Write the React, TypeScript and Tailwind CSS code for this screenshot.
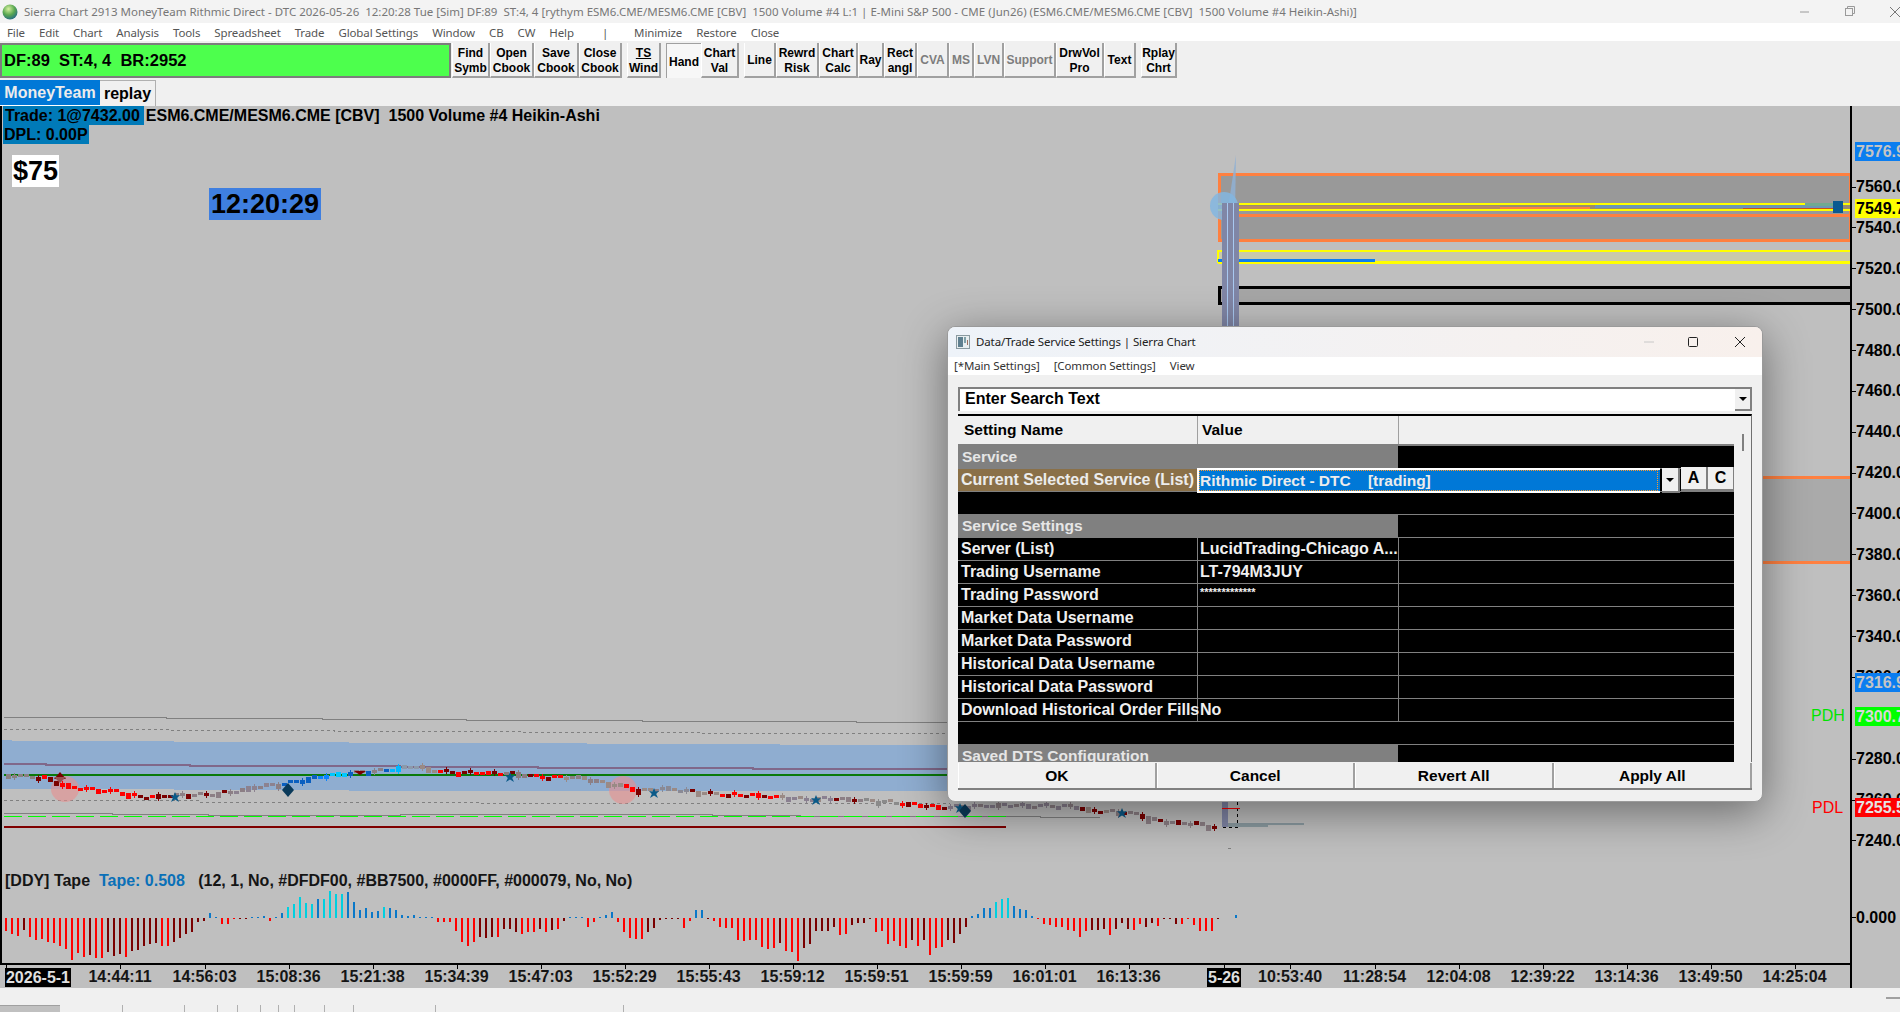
import { Fragment } from "react";

const ARIAL = "font-['Liberation_Sans',Arial,sans-serif]";
const SEGOE = "font-['Noto_Sans','Open_Sans',sans-serif]";

const menuItems = [
  "File",
  "Edit",
  "Chart",
  "Analysis",
  "Tools",
  "Spreadsheet",
  "Trade",
  "Global Settings",
  "Window",
  "CB",
  "CW",
  "Help",
];

type ToolButton = {
  lines: string[];
  width: string;
  gap?: boolean;
  off?: boolean;
  pressed?: boolean;
};

const toolButtons: ToolButton[] = [
  { lines: ["Find", "Symb"], width: "w-[38px]" },
  { lines: ["Open", "Cbook"], width: "w-[44px]" },
  { lines: ["Save", "Cbook"], width: "w-[45px]" },
  { lines: ["Close", "Cbook"], width: "w-[43px]" },
  { lines: ["TS", "Wind"], width: "w-[34px]", gap: true },
  { lines: ["Hand"], width: "w-[35px]", gap: true, pressed: true },
  { lines: ["Chart", "Val"], width: "w-[38px]" },
  { lines: ["Line"], width: "w-[32px]", gap: true },
  { lines: ["Rewrd", "Risk"], width: "w-[43px]" },
  { lines: ["Chart", "Calc"], width: "w-[39px]" },
  { lines: ["Ray"], width: "w-[26px]" },
  { lines: ["Rect", "angl"], width: "w-[33px]" },
  { lines: ["CVA"], width: "w-[32px]", off: true },
  { lines: ["MS"], width: "w-[25px]", off: true },
  { lines: ["LVN"], width: "w-[30px]", off: true },
  { lines: ["Support"], width: "w-[52px]", off: true },
  { lines: ["DrwVol", "Pro"], width: "w-[48px]" },
  { lines: ["Text"], width: "w-[32px]" },
  { lines: ["Rplay", "Chrt"], width: "w-[36px]", gap: true },
];

const priceTicks = [
  7560, 7540, 7520, 7500, 7480, 7460, 7440, 7420, 7400, 7380, 7360, 7340, 7320,
  7280, 7260, 7240,
];

const priceY = (p: number) => 186.6 + (7560 - p) * 2.043;

const priceTags = [
  { text: "7576.9", top: "top-[36px]", box: "bg-[#0a7df0] text-[#c4c4c4]" },
  { text: "7549.7", top: "top-[93px]", box: "bg-[#ffff00] text-black" },
  { text: "7316.9", top: "top-[567px]", box: "bg-[#0a7df0] text-[#c4c4c4]" },
  { text: "7300.7", top: "top-[601px]", box: "bg-[#00ff00] text-[#d8d8d8]" },
  { text: "7255.5", top: "top-[692px]", box: "bg-[#ff0000] text-[#e4e4e4]" },
];

const timeLabels: [string, number][] = [
  ["14:44:11", 120],
  ["14:56:03", 204.5],
  ["15:08:36", 288.5],
  ["15:21:38", 372.5],
  ["15:34:39", 456.5],
  ["15:47:03", 540.5],
  ["15:52:29", 624.5],
  ["15:55:43", 708.5],
  ["15:59:12", 792.5],
  ["15:59:51", 876.5],
  ["15:59:59", 960.5],
  ["16:01:01", 1044.5],
  ["16:13:36", 1128.5],
  ["10:53:40", 1290],
  ["11:28:54", 1374.5],
  ["12:04:08", 1458.5],
  ["12:39:22", 1542.5],
  ["13:14:36", 1626.5],
  ["13:49:50", 1710.5],
  ["14:25:04", 1794.5],
];

const tabTicks = [122, 184, 217, 237, 260, 278, 294, 324, 353, 435, 623];

// price path of the candles, x -> y in page pixels
const path: [number, number][] = [
  [4, 775], [41, 777], [61, 785], [73, 788], [114, 791], [139, 797], [175, 795],
  [212, 794], [237, 791], [253, 787], [286, 783], [322, 776], [359, 772], [392, 769],
  [412, 766], [428, 770], [449, 772], [510, 773], [539, 777], [580, 777], [598, 782],
  [622, 786], [639, 791], [663, 788], [688, 791], [712, 794], [753, 795], [778, 797],
  [802, 799], [826, 798], [867, 800], [900, 803], [937, 807], [961, 806], [1006, 805],
  [1071, 806], [1092, 811], [1120, 812], [1140, 815], [1150, 820], [1176, 823],
  [1193, 823], [1205, 826], [1213, 827],
];

const candleColors: [number, string, string][] = [
  [32, "#8a8080", "#8a8080"],
  [62, "#7a0000", "#ff0000"],
  [130, "#ff0000", "#ff0000"],
  [165, "#7a0000", "#ff0000"],
  [230, "#8c7f85", "#7a0000"],
  [282, "#8c8290", "#8c7f85"],
  [315, "#0a5fc0", "#0a5fc0"],
  [330, "#0a84ff", "#0a84ff"],
  [345, "#00c8ff", "#00c8ff"],
  [385, "#8c7f85", "#0a5fc0"],
  [400, "#00b8ff", "#0a84ff"],
  [420, "#8c9aaa", "#8c9aaa"],
  [436, "#9a8a85", "#9a8a85"],
  [475, "#7a0000", "#ff0000"],
  [500, "#ff0000", "#7a0000"],
  [530, "#8a7a80", "#7a0000"],
  [560, "#ff0000", "#7a0000"],
  [600, "#8c7f85", "#9a8a85"],
  [622, "#9a8a85", "#9a8a85"],
  [640, "#ff0000", "#7a0000"],
  [660, "#9a8a85", "#8c7f85"],
  [690, "#8a8a95", "#9a8a85"],
  [720, "#9a8a85", "#7a0000"],
  [780, "#ff0000", "#7a0000"],
  [830, "#8a8090", "#9a8a85"],
  [860, "#8c7f85", "#7a0000"],
  [900, "#8a8a8a", "#9a8a85"],
  [945, "#ff0000", "#7a0000"],
  [1080, "#8a8090", "#8c7f85"],
  [1110, "#7a0000", "#9a8a85"],
  [1230, "#8c7f85", "#7a0000"],
];

const pathY = (x: number) => {
  for (let i = 1; i < path.length; i++) {
    if (x <= path[i][0]) {
      const [x0, y0] = path[i - 1];
      const [x1, y1] = path[i];
      return y0 + ((x - x0) / (x1 - x0)) * (y1 - y0);
    }
  }
  return path[path.length - 1][1];
};

const candles = Array.from({ length: 202 }, (_, i) => {
  const x = 6 + i * 6;
  const wobble = Math.sin(i * 1.7) * 1.2;
  const a = pathY(x - 3) + wobble;
  const b = pathY(x + 3) + wobble;
  const top = Math.min(a, b) - 1;
  const height = Math.max(3, Math.abs(a - b) + 2.5 + (i % 5 === 0 ? 2 : 0));
  const range = candleColors.find((c) => x < c[0]) ?? candleColors[0];
  return { x, top, height, color: i % 3 === 0 ? range[2] : range[1], wick: i % 4 === 1 };
});

// tape oscillator heights read off the chart, one bar every 6px
const oscValues = [
  -13, -16, -18, -12, -19, -22, -21, -24, -25, -28, -31, -42, -35, -39, -37, -40, -40, -34,
  -38, -36, -39, -33, -32, -28, -26, -25, -28, -28, -24, -20, -16, -14, -4, -3, 5,
  0, -6, -6, -1, -1, -1, 1, 0, 2, -3, 0, 5, 11, 14, 21, 15, 14, 19, 19, 27, 24, 24, 26, 16, 8,
  10, 6, 7, 11, 10, 8, 3, 2, 3, 0, 1, 1, -4, -4, -4, -13, -24, -28, -24, -19, -20, -19, -19,
  -11, -11, -14, -16, -14, -14, -11, -14, -12, -11, -3, 0, 1, 1, -9, -4, 0, 3, 6,
  -4, -14, -20, -21, -21, -14, -10, -2, -1, -1, -1, -10, -3, 8, 8, -1, -3, -9, -10, -10,
  -22, -23, -22, -22, -29, -31, -30, -25, -33, -34, -43, -30, -26, -13, -13, -13, -9, -17, -16,
  -7, -5, -5, -1, -14, -13, -26, -23, -28, -30, -22, -28, -22, -37, -30, -29, -22, -25, -16, -9,
  2, 4, 10, 10, 16, 19, 20, 12, 9, 8, 2, -1, -6, -7, -9, -9, -12, -13, -19, -13, -12, -12, -11,
  -17, -11, -5, -11, -12, -6, -9, -5, -8, -1, -1, -6, -6, -1, -7, -13, -13, -13, -1,
];

const oscBars = oscValues.map((v, i, all) => {
  const prev = i > 2 ? all[i - 3] : 0;
  let color = "#0a78c8";
  if (v < 0) color = v <= prev ? "#ff0000" : "#7a0000";
  else if (v >= 11 && v >= prev) color = "#00d0e0";
  return { x: 5 + i * 6, v, color };
});

const stars: [number, number][] = [
  [175, 797], [510, 777], [654, 793], [816, 800], [960, 808], [1122, 813],
];

const starPoints = (cx: number, cy: number) =>
  [
    [0, -5], [1.5, -1.5], [5, -2], [2.2, 1], [4, 5], [0, 2.5], [-4, 5], [-2.2, 1], [-5, -2], [-1.5, -1.5],
  ]
    .map(([dx, dy]) => `${cx + dx},${cy + dy}`)
    .join(" ");

function ChartDrawing() {
  return (
    <svg
      className="absolute top-0 left-[-2px] h-[857px] w-[1850px]"
      viewBox="0 106 1850 857"
      shapeRendering="crispEdges"
    >
      {/* upper zones */}
      <rect x="1219" y="174" width="631" height="66" fill="#999999" stroke="#ff8040" strokeWidth="3" />
      <rect x="1218" y="252" width="632" height="10" fill="#c9c9ab" />
      <path d="M1218 262.5 V251 H1850 M1218 262.5 H1850" fill="none" stroke="#ffff00" strokeWidth="2.5" />
      <rect x="1218" y="258.5" width="157" height="3" fill="#0a7df0" />
      <rect x="1219" y="287" width="631" height="16" fill="#a6a6a6" />
      <path d="M1850 287 H1219 V303 H1850" fill="none" stroke="#000000" strokeWidth="3" />
      <rect x="1218" y="214" width="632" height="3" fill="#ff8040" />
      <rect x="1218" y="204" width="632" height="5" fill="#9a8c70" />
      <rect x="1595" y="205" width="243" height="3" fill="#6c96b8" />
      <rect x="1220" y="206" width="280" height="3" fill="#ba8a60" />
      <rect x="1500" y="207" width="90" height="3" fill="#ff8040" />
      <rect x="1743" y="208" width="95" height="3" fill="#c8501c" />
      <rect x="1218" y="202.5" width="632" height="2" fill="#ffff00" />
      <rect x="1218" y="209" width="632" height="2" fill="#ffff00" />
      <rect x="1805" y="202.5" width="35" height="3" fill="#70aa90" />
      <rect x="1833" y="201" width="10" height="12" fill="#0a5a90" />
      <g shapeRendering="auto">
        <polygon points="1236,155 1235,215 1227,215" fill="#8fb0d4" opacity="0.85" />
        <circle cx="1224" cy="206" r="14" fill="#82b6e0" opacity="0.85" />
      </g>
      <rect x="1222" y="203" width="17" height="124" fill="#8086a6" />
      <rect x="1227" y="203" width="1" height="124" fill="#a8c8f0" />
      <rect x="1233" y="203" width="1" height="124" fill="#a8c8f0" />

      {/* zone partly behind the dialog */}
      <rect x="1300" y="478" width="550" height="83" fill="#aaaaaa" />
      <rect x="1300" y="475.5" width="550" height="3" fill="#ff8040" />
      <rect x="1300" y="560.5" width="550" height="3" fill="#ff8040" />

      {/* lower study */}
      <path
        d="M0 740 H12 V741 H174 V742 H349 V743 H587 V744 H780 V745 H950 V791 H780 V791 H349 V790 H174 V789 H0 Z"
        fill="#8fadd0"
      />
      <path
        d="M4 717 H166 V718 H322 V719 H466 V720 H642 V721 H856 V722 H1000"
        fill="none"
        stroke="#808080"
        strokeWidth="1"
      />
      <path
        d="M4 729 H170 V730 H334 V731 H520 V732 H700 V733 H1000"
        fill="none"
        stroke="#808080"
        strokeDasharray="3 3"
      />
      <path
        d="M4 764 H46 V765 H190 V766 H400 V767 H538 V768 H753 V769 H950"
        fill="none"
        stroke="#80688a"
        strokeWidth="2"
      />
      <rect x="4" y="774" width="1000" height="2" fill="#0a7a0a" />
      <path d="M4 800 H200 V802 H480 V803 H950" fill="none" stroke="#808080" strokeDasharray="3 3" />
      <path
        d="M4 813 H112 V814 H208 V815 H400 V814 H712 V815 H800 V816 H1040 V817 H1100"
        fill="none"
        stroke="#808080"
      />
      <line x1="4" y1="816.5" x2="1006" y2="816.5" stroke="#00ff00" strokeWidth="1.2" strokeDasharray="18 6" />
      <rect x="4" y="826" width="1002" height="2" fill="#800000" />

      <g shapeRendering="auto">
        <ellipse cx="65" cy="789" rx="14" ry="13" fill="#e88f8f" opacity="0.6" />
        <ellipse cx="623" cy="790" rx="14" ry="14" fill="#e88f8f" opacity="0.6" />
      </g>

      {candles.map((c) => (
        <Fragment key={c.x}>
          {c.wick && <rect x={c.x + 2} y={c.top - 2} width="1" height={c.height + 4} fill={c.color} />}
          <rect x={c.x} y={c.top} width="5" height={c.height} fill={c.color} />
        </Fragment>
      ))}

      <g shapeRendering="auto">
        {stars.map(([x, y]) => (
          <polygon key={x} points={starPoints(x, y)} fill="#0b5a88" />
        ))}
        <polygon points="288,783 294,790 288,797 282,790" fill="#0a3a5a" />
        <polygon points="965,804 971,811 965,818 959,811" fill="#0a3a5a" />
        <polygon points="60,772 66,779 54,779" fill="#7a0000" />
        <polygon points="60,783 66,777 54,777" fill="#9a5050" />
        <polygon points="360,771 366,771 360,775 354,771" fill="#7a0000" />
      </g>

      {/* last bar and volume profile */}
      <rect x="1222" y="800" width="6" height="27" fill="#8086a6" />
      <path d="M1237 802 V827 H1222" fill="none" stroke="#000000" strokeDasharray="3 3" />
      <rect x="1222" y="808" width="18" height="1" fill="#ff0000" />
      <rect x="1228" y="823" width="76" height="2" fill="#8a9aa0" />
      <rect x="1228" y="825" width="40" height="2" fill="#8a9aa0" />
      <rect x="1228" y="848" width="3" height="1" fill="#808080" />

      {/* tape oscillator */}
      {oscBars.map((b) => (
        <rect
          key={b.x}
          x={b.x}
          y={b.v < 0 ? 918 : 918 - Math.max(b.v, 1)}
          width="2"
          height={Math.max(Math.abs(b.v), 1)}
          fill={b.color}
        />
      ))}
      <rect x="1235" y="915" width="2" height="3" fill="#0a78c8" />
    </svg>
  );
}

function Toolbar() {
  return (
    <div className="flex h-[65px] flex-col bg-[#f0f0f0]">
      <div className={`flex h-[37px] items-start pt-[2px] ${ARIAL}`}>
        <div className="flex h-[35px] w-[451px] items-center border-2 border-[#7d7d7d] bg-[#4dff4d] pl-[2px] text-[16.5px] font-bold text-black">
          DF:89&nbsp;&nbsp;ST:4, 4&nbsp;&nbsp;BR:2952
        </div>
        <div className="w-px" />
        {toolButtons.map((b) => (
          <div
            key={b.lines.join("")}
            className={`flex h-[35px] flex-col items-center justify-center pt-[2px] text-[12px] leading-[14.5px] font-bold ${b.width} ${
              b.gap ? "ml-[5px]" : ""
            } ${b.off ? "text-[#7d7d7d]" : "text-black"} ${
              b.pressed
                ? "border-t border-l border-t-[#a0a0a0] border-l-[#a0a0a0] bg-[#f7f7f7]"
                : "border-r-2 border-b-2 border-l border-r-[#a0a0a0] border-b-[#a0a0a0] border-l-white"
            }`}
          >
            {b.lines.map((l) => (
              <span key={l} className="whitespace-nowrap">
                {l === "TS" ? <span className="underline">TS</span> : l}
              </span>
            ))}
          </div>
        ))}
      </div>
      <div className={`mt-[2px] flex h-[26px] items-stretch text-[16px] font-bold ${ARIAL}`}>
        <div className="flex w-[100px] items-center justify-center border-b border-white bg-[#0078d7] text-[#ececec]">
          MoneyTeam
        </div>
        <div className="flex w-[56px] items-center justify-center border-t border-r border-[#b0b0b0] text-black">
          replay
        </div>
      </div>
    </div>
  );
}

function ChartArea() {
  return (
    <div className={`flex min-h-0 flex-1 bg-[#bfbfbf] ${ARIAL}`}>
      <div className="flex w-[1850px] flex-col">
        <div className="relative flex-1 overflow-hidden border-l-2 border-black">
          <ChartDrawing />
          <div className="relative flex flex-col text-[16px] leading-[19px] font-bold text-black">
            <div className="whitespace-pre">
              <span className="ml-[1px] inline-block bg-[#007ab8] pr-[4px] pl-[2px]">Trade: 1@7432.00</span>
              <span className="ml-[2px]">ESM6.CME/MESM6.CME [CBV]  1500 Volume #4 Heikin-Ashi</span>
            </div>
            <div className="ml-[1px] w-fit bg-[#007ab8] pr-[1px] pl-[1px]">DPL: 0.00P</div>
            <div className="mt-[11px] ml-[10px] flex h-[32px] w-[47px] items-center justify-center bg-white text-[27px]">
              $75
            </div>
            <div className="mt-[1px] ml-[207px] flex h-[32px] w-[112px] items-center justify-center bg-[#3f7fe0] text-[27px]">
              12:20:29
            </div>
          </div>
          <div className="absolute top-[765px] left-[3px] text-[16px] leading-[20px] font-bold whitespace-pre text-[#151515]">
            {"[DDY] Tape  "}
            <span className="text-[#0a70b8]">Tape: 0.508</span>
            {"   (12, 1, No, #DFDF00, #BB7500, #0000FF, #000079, No, No)"}
          </div>
          <span className="absolute top-[600px] left-[1809px] text-[16px] leading-[19px] text-[#00e400]">PDH</span>
          <span className="absolute top-[692px] left-[1810px] text-[16px] leading-[19px] text-[#ff0000]">PDL</span>
        </div>
        <div className="relative h-[25px] border-t-2 border-black text-[16px] leading-[23px] font-bold text-[#151515]">
          <div className="absolute top-[3px] left-[5px] flex h-[19px] w-[66px] items-center justify-center bg-black text-[#e0e0e0]">
            2026-5-1
          </div>
          <div className="absolute top-[3px] left-[1207px] flex h-[19px] w-[34px] items-center justify-center bg-black text-[#e0e0e0]">
            5-26
          </div>
          {timeLabels.map(([text, x]) => (
            <Fragment key={text}>
              <span className="absolute top-0 -translate-x-1/2" style={{ left: x }}>
                {text}
              </span>
              <span className="absolute top-0 h-[4px] w-px bg-black" style={{ left: x }} />
            </Fragment>
          ))}
          <span className="absolute top-0 left-[6px] h-[4px] w-px bg-black" />
          <span className="absolute top-0 left-[1224px] h-[4px] w-px bg-black" />
        </div>
      </div>
      <div className="relative flex-1 overflow-hidden border-l-2 border-black text-[16px] leading-[19px] font-bold text-black">
        {priceTicks.map((p) => (
          <Fragment key={p}>
            <span className="absolute left-0 h-px w-[4px] bg-black" style={{ top: priceY(p) - 106 }} />
            <span className="absolute left-[4px]" style={{ top: priceY(p) - 106 - 9.5 }}>
              {p}.0
            </span>
          </Fragment>
        ))}
        <span className="absolute top-[811px] left-0 h-px w-[4px] bg-black" />
        <span className="absolute top-[802px] left-[4px]">0.000</span>
        {priceTags.map((t) => (
          <span
            key={t.text}
            className={`absolute left-[3px] h-[19px] w-[60px] pl-[1px] ${t.top} ${t.box}`}
          >
            {t.text}
          </span>
        ))}
      </div>
    </div>
  );
}

type Row = {
  name?: string;
  value?: string;
  kind?: "section" | "selected" | "blank" | "password";
};

const rows: Row[] = [
  { name: "Service", kind: "section" },
  { name: "Current Selected Service (List)", kind: "selected" },
  { kind: "blank" },
  { name: "Service Settings", kind: "section" },
  { name: "Server (List)", value: "LucidTrading-Chicago A..." },
  { name: "Trading Username", value: "LT-794M3JUY" },
  { name: "Trading Password", value: "*************", kind: "password" },
  { name: "Market Data Username" },
  { name: "Market Data Password" },
  { name: "Historical Data Username" },
  { name: "Historical Data Password" },
  { name: "Download Historical Order Fills", value: "No" },
  { kind: "blank" },
  { name: "Saved DTS Configuration", kind: "section" },
];

function SettingRow({ row }: { row: Row }) {
  if (row.kind === "blank") {
    return <div className="h-[23px] shrink-0 border-b border-[#808080] bg-black" />;
  }
  if (row.kind === "section") {
    return (
      <div className="flex h-[23px] shrink-0 border-b border-[#808080] bg-black">
        <div className="flex w-[440px] items-center bg-[#808080] pl-[4px] text-[15.5px] text-[#e6e6e6]">{row.name}</div>
      </div>
    );
  }
  if (row.kind === "selected") {
    return (
      <div className="relative flex h-[23px] shrink-0 border-b border-[#808080] bg-black">
        <div className="flex w-[239px] items-center bg-[#8a7048] pl-[3px] whitespace-nowrap text-[#ececec]">
          {row.name}
        </div>
        <div className="absolute top-[-1px] left-[239px] flex h-[25px] w-[463px] items-center border-2 border-r-0 border-white bg-[#0078d7] pl-[1px] text-[15.5px] whitespace-pre text-[#ececec] outline-1 -outline-offset-3 outline-dotted outline-[#ff9a30]">
          {"Rithmic Direct - DTC    [trading]"}
        </div>
        <div className="absolute top-[-1px] left-[704px] flex h-[25px] w-[18px] items-center justify-center border-r-2 border-b-2 border-[#808080] bg-[#f0f0f0]">
          <span className="border-x-[4px] border-t-[4px] border-x-transparent border-t-black" />
        </div>
        <div className="absolute top-[-2px] left-[723px] flex h-[24px] w-[27px] items-center justify-center border-r-2 border-b-2 border-[#808080] bg-[#f0f0f0] text-black">
          A
        </div>
        <div className="absolute top-[-2px] left-[750px] flex h-[24px] w-[27px] items-center justify-center border-r-2 border-b-2 border-[#808080] bg-[#f0f0f0] text-black">
          C
        </div>
      </div>
    );
  }
  return (
    <div className="flex h-[23px] shrink-0 border-b border-[#808080] bg-black text-[#f0f0f0]">
      <div className="flex w-[240px] items-center border-r border-[#808080] pl-[3px] whitespace-nowrap">{row.name}</div>
      <div
        className={`flex w-[201px] pl-[2px] whitespace-nowrap ${
          row.kind === "password" ? "items-start text-[11px]" : "items-center"
        } border-r border-[#808080]`}
      >
        {row.value}
      </div>
    </div>
  );
}

function SettingsDialog() {
  return (
    <div className="absolute top-[326px] left-[947px] flex h-[476px] w-[816px] flex-col overflow-hidden rounded-[8px] border border-[#9a9a9a] bg-[#f0f0f0] shadow-[0_10px_45px_rgba(0,0,0,0.45)]">
      <div className={`flex h-[30px] shrink-0 items-center bg-gradient-to-r from-[#eef3f9] to-[#f8f0ec] text-[11.5px] tracking-[-0.12px] text-[#222] ${SEGOE}`}>
        <svg className="mr-[6px] ml-[8px]" width="14" height="14" viewBox="0 0 14 14">
          <rect x="0.5" y="0.5" width="13" height="13" fill="#e8eef0" stroke="#8a9aa0" />
          <rect x="2" y="2" width="5" height="10" fill="#5f7f8f" />
          <rect x="8" y="2" width="2" height="6" fill="#7fa0a8" />
          <rect x="11" y="5" width="1" height="5" fill="#a07060" />
        </svg>
        <span>Data/Trade Service Settings | Sierra Chart</span>
        <svg className="ml-auto" width="119" height="14" viewBox="0 0 119 14" fill="none">
          <line x1="1" y1="7" x2="11" y2="7" stroke="#c8c8c8" />
          <rect x="45.5" y="2.5" width="9" height="9" rx="1" stroke="#222" />
          <path d="M92 2 L102 12 M102 2 L92 12" stroke="#222" />
        </svg>
      </div>
      <div className={`flex h-[18px] shrink-0 items-center gap-[14px] bg-white pl-[6px] text-[11.5px] tracking-[-0.12px] text-[#333] ${SEGOE}`}>
        <span>[*Main Settings]</span>
        <span>[Common Settings]</span>
        <span>View</span>
      </div>
      <div className={`flex min-h-0 flex-1 flex-col px-[10px] pt-[12px] pb-[11px] text-[16px] font-bold ${ARIAL}`}>
        <div className="flex h-[24px] shrink-0 items-center justify-between border-t-2 border-l-2 border-[#808080] bg-white pb-[2px] pl-[5px] text-[16px] text-black">
          <span>Enter Search Text</span>
          <div className="mt-[2px] flex h-[22px] w-[17px] items-center justify-center border-r-2 border-b-2 border-[#808080] bg-[#f0f0f0]">
            <span className="border-x-[4px] border-t-[4px] border-x-transparent border-t-black" />
          </div>
        </div>
        <div className="mt-[3px] flex h-[348px] shrink-0 overflow-hidden border-t-2 border-r border-t-black border-r-[#707070]">
          <div className="flex min-w-0 flex-1 flex-col">
            <div className="flex h-[30px] shrink-0 border-b-2 border-[#808080] bg-[#f0f0f0] text-[15.5px] text-black">
              <div className="flex w-[240px] items-center border-r border-[#a0a0a0] pl-[6px]">Setting Name</div>
              <div className="flex w-[201px] items-center border-r border-[#a0a0a0] pl-[4px]">Value</div>
            </div>
            {rows.map((r, i) => (
              <SettingRow key={i} row={r} />
            ))}
          </div>
          <div className="relative w-[17px] shrink-0 bg-[#f0f0f0]">
            <span className="absolute top-[18px] left-[8px] h-[17px] w-[2px] bg-[#808080]" />
          </div>
        </div>
        <div className="mt-[1px] grid h-[27px] shrink-0 grid-cols-4 border-b-2 border-[#808080] text-[15.5px] text-black">
          {["OK", "Cancel", "Revert All", "Apply All"].map((label) => (
            <div key={label} className="flex items-center justify-center border-r-2 border-[#a0a0a0] border-l border-l-white">
              {label}
            </div>
          ))}
        </div>
      </div>
    </div>
  );
}

export default function App() {
  return (
    <div className="relative flex h-[1012px] w-[1900px] flex-col overflow-hidden bg-[#f0f0f0]">
      <div className={`flex h-[23px] shrink-0 items-center bg-[#f3f3f3] text-[11.5px] text-[#777] ${SEGOE}`}>
        <svg className="mr-[6px] ml-[2px]" width="16" height="16" viewBox="0 0 16 16">
          <defs>
            <radialGradient id="globe" cx="0.4" cy="0.3" r="0.8">
              <stop offset="0" stopColor="#d8f0a0" />
              <stop offset="0.5" stopColor="#5aa850" />
              <stop offset="1" stopColor="#1a5f90" />
            </radialGradient>
          </defs>
          <circle cx="8" cy="8" r="7.5" fill="url(#globe)" />
        </svg>
        <span className="whitespace-pre">
          {"Sierra Chart 2913 MoneyTeam Rithmic Direct - DTC 2026-05-26  12:20:28 Tue [Sim] DF:89  ST:4, 4 [rythym ESM6.CME/MESM6.CME [CBV]  1500 Volume #4 L:1 | E-Mini S&P 500 - CME (Jun26) (ESM6.CME/MESM6.CME [CBV]  1500 Volume #4 Heikin-Ashi)]"}
        </span>
        <svg className="ml-auto" width="100" height="12" viewBox="0 0 100 12" fill="none">
          <line x1="0" y1="6" x2="9" y2="6" stroke="#9a9a9a" />
          <rect x="45.5" y="2.5" width="7" height="7" stroke="#9a9a9a" />
          <path d="M47.5 2.5 V0.5 H54.5 V7.5 H52.5" stroke="#9a9a9a" />
          <path d="M90 1 L100 11 M100 1 L90 11" stroke="#777" />
        </svg>
      </div>
      <div className={`flex h-[18px] shrink-0 items-center gap-[14px] bg-white pt-[1px] pl-[7px] text-[11.5px] tracking-[-0.12px] text-[#555] ${SEGOE}`}>
        {menuItems.map((m) => (
          <span key={m}>{m}</span>
        ))}
        <span className="ml-[14px]">|</span>
        <span className="ml-[12px]">Minimize</span>
        <span>Restore</span>
        <span>Close</span>
      </div>
      <Toolbar />
      <ChartArea />
      <div className="relative h-[24px] shrink-0 bg-[#f0f0f0]">
        <span className="absolute top-[17px] left-0 h-[7px] w-[60px] border-t border-[#a0a0a0] bg-[#c0c0c0]" />
        {tabTicks.map((x) => (
          <span key={x} className="absolute top-[17px] h-[7px] w-px bg-[#b0b0b0]" style={{ left: x }} />
        ))}
        <span className="absolute top-[9px] right-0 h-[2px] w-[14px] bg-[#a0a0a0]" />
      </div>
      <SettingsDialog />
    </div>
  );
}
